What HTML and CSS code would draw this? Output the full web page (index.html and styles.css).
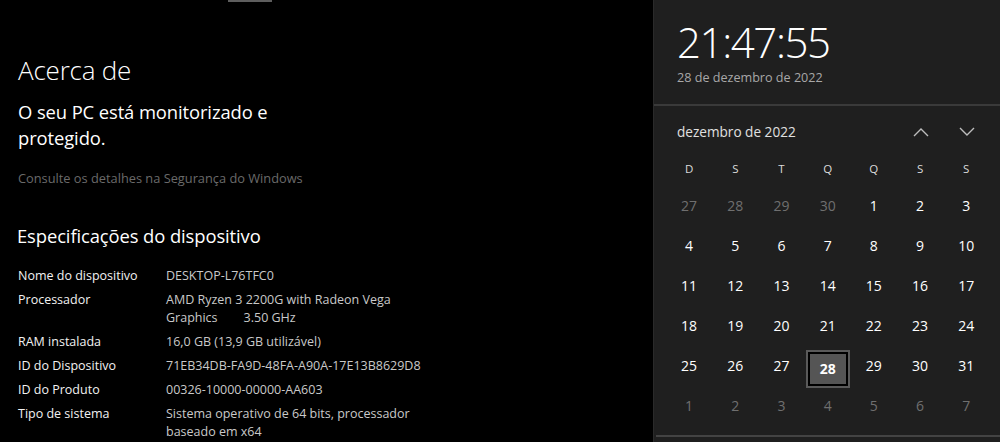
FILE: index.html
```html
<!DOCTYPE html>
<html lang="pt">
<head>
<meta charset="utf-8">
<title>Acerca de</title>
<link rel="stylesheet" href="styles.css">
</head>
<body>
<div class="screen">
  <main class="about">
    <div class="topbar"></div>
    <h1 class="title">Acerca de</h1>
    <p class="status">O seu PC está monitorizado e<br>protegido.</p>
    <p class="link">Consulte os detalhes na Segurança do Windows</p>
    <h2 class="subtitle">Especificações do dispositivo</h2>
    <dl class="specs">
      <dt>Nome do dispositivo</dt><dd>DESKTOP-L76TFC0</dd>
      <dt>Processador</dt><dd>AMD Ryzen 3 2200G with Radeon Vega<br>Graphics<span class="gap"></span>3.50 GHz</dd>
      <dt>RAM instalada</dt><dd>16,0 GB (13,9 GB utilizável)</dd>
      <dt>ID do Dispositivo</dt><dd>71EB34DB-FA9D-48FA-A90A-17E13B8629D8</dd>
      <dt>ID do Produto</dt><dd>00326-10000-00000-AA603</dd>
      <dt>Tipo de sistema</dt><dd>Sistema operativo de 64 bits, processador<br>baseado em x64</dd>
    </dl>
  </main>
  <aside class="flyout">
    <div class="clock">
      <div class="time">21:47:55</div>
      <div class="date">28 de dezembro de 2022</div>
    </div>
    <div class="cal">
      <div class="cal-head">
        <span class="month">dezembro de 2022</span>
        <div class="nav">
          <svg class="chev" width="18" height="10" viewBox="0 0 18 10"><path d="M2 9 L9 2 L16 9" fill="none" stroke="#bdbdbd" stroke-width="1.4"/></svg>
          <svg class="chev" width="18" height="10" viewBox="0 0 18 10"><path d="M2 1 L9 8 L16 1" fill="none" stroke="#bdbdbd" stroke-width="1.4"/></svg>
        </div>
      </div>
      <div class="grid">
        <span class="dow">D</span><span class="dow">S</span><span class="dow">T</span><span class="dow">Q</span><span class="dow">Q</span><span class="dow">S</span><span class="dow">S</span>
        <span class="day other">27</span><span class="day other">28</span><span class="day other">29</span><span class="day other">30</span><span class="day">1</span><span class="day">2</span><span class="day">3</span>
        <span class="day">4</span><span class="day">5</span><span class="day">6</span><span class="day">7</span><span class="day">8</span><span class="day">9</span><span class="day">10</span>
        <span class="day">11</span><span class="day">12</span><span class="day">13</span><span class="day">14</span><span class="day">15</span><span class="day">16</span><span class="day">17</span>
        <span class="day">18</span><span class="day">19</span><span class="day">20</span><span class="day">21</span><span class="day">22</span><span class="day">23</span><span class="day">24</span>
        <span class="day">25</span><span class="day">26</span><span class="day">27</span><span class="day"><span class="today">28</span></span><span class="day">29</span><span class="day">30</span><span class="day">31</span>
        <span class="day other">1</span><span class="day other">2</span><span class="day other">3</span><span class="day other">4</span><span class="day other">5</span><span class="day other">6</span><span class="day other">7</span>
      </div>
    </div>
    <div class="foot"></div>
  </aside>
</div>
</body>
</html>
```

FILE: styles.css
```css
* { box-sizing: border-box; }
html, body { margin: 0; padding: 0; background: #000; }
body {
  font-family: "Open Sans", "Noto Sans", "Liberation Sans", sans-serif;
  color: #fff;
}
.screen {
  display: flex;
  width: 1000px;
  height: 442px;
  overflow: hidden;
}
.about {
  width: 653px;
  flex: none;
  background: #000;
  padding-left: 18px;
}
.topbar {
  width: 44px;
  height: 2px;
  margin-left: 210px;
  background: #5e5e5e;
}
.title {
  margin: 50px 0 0;
  font-size: 26px;
  font-weight: 300;
  line-height: 36px;
  letter-spacing: -0.2px;
}
.status {
  margin: 11px 0 0;
  font-size: 18.4px;
  line-height: 26px;
  font-weight: 400;
  letter-spacing: -0.1px;
}
.link {
  margin: 17px 0 0;
  font-size: 12.8px;
  line-height: 20px;
  color: #6a6a6a;
}
.subtitle {
  margin: 34px 0 0 -1px;
  font-size: 18.4px;
  line-height: 28px;
  font-weight: 400;
  letter-spacing: -0.1px;
}
.specs {
  margin: 17px 0 0;
  display: grid;
  grid-template-columns: 148px auto;
  row-gap: 6px;
  font-size: 12.5px;
  line-height: 18px;
}
.specs dt { color: #f2f2f2; margin: 0; }
.specs dd { color: #c9c9c9; margin: 0; white-space: nowrap; }
.gap { display: inline-block; width: 26px; }

.flyout {
  flex: 1;
  background: #1f1f1f;
  border-left: 1px solid #2a2a2a;
  display: flex;
  flex-direction: column;
}
.clock {
  padding: 16px 0 0 23px;
  height: 106px;
  border-bottom: 2px solid #3a3a3a;
}
.time {
  font-size: 42px;
  font-weight: 300;
  line-height: 51px;
  color: #fff;
  letter-spacing: -1.4px;
}
.date {
  font-size: 12.6px;
  line-height: 20px;
  color: #a8a8a8;
  margin-top: 1px;
}
.cal {
  padding: 0 11px 0 12px;
  flex: 1;
}
.cal-head {
  display: flex;
  align-items: center;
  justify-content: space-between;
  height: 46px;
  padding-left: 11px;
  padding-top: 5px;
}
.month {
  font-size: 13.6px;
  color: #e0e0e0;
}
.nav {
  display: flex;
  gap: 28px;
  padding-right: 13px;
}
.chev { display: block; }
.grid {
  display: grid;
  grid-template-columns: repeat(7, 46.2px);
  grid-auto-rows: 40px;
  grid-template-rows: 33px;
}
.dow {
  display: flex;
  align-items: center;
  justify-content: center;
  font-size: 11.5px;
  color: #dcdcdc;
}
.day {
  display: flex;
  align-items: center;
  justify-content: center;
  font-size: 14px;
  color: #fff;
}
.day.other { color: #6f6f6f; }
.today {
  width: 44px;
  height: 38px;
  margin-top: 7px;
  display: flex;
  align-items: center;
  justify-content: center;
  background: #555;
  border: 2px solid #5a5a5a;
  box-shadow: inset 0 0 0 2px #000;
  font-weight: 700;
}
.foot {
  height: 7px;
  margin-left: 2px;
  border-top: 2px solid #434343;
}
```
